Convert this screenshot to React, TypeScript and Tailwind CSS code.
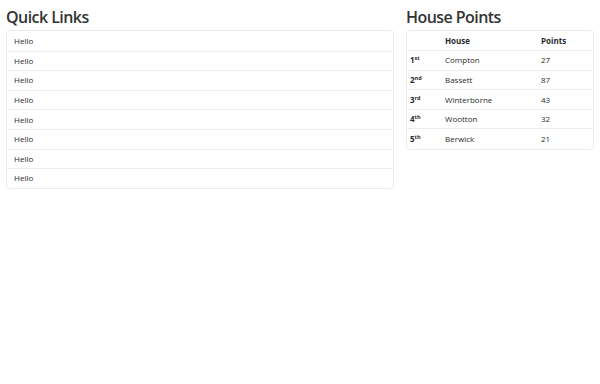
import React from "react";

const links = Array.from({ length: 8 }, () => "Hello");

const houses = [
    { rank: 1, suffix: "st", name: "Compton", points: 27 },
    { rank: 2, suffix: "nd", name: "Bassett", points: 87 },
    { rank: 3, suffix: "rd", name: "Winterborne", points: 43 },
    { rank: 4, suffix: "th", name: "Wootton", points: 32 },
    { rank: 5, suffix: "th", name: "Berwick", points: 21 },
];

export default function App() {
    return (
        <div className="w-[600px] h-[384px] bg-white text-[#2b2b2b] font-['Open_Sans',sans-serif]">
            <div className="grid grid-cols-[388px_188px] gap-x-[12px] px-[6px] pt-[5px]">
                <section>
                    <h2 className="text-[16px] leading-[25px] font-semibold tracking-[-0.55px] text-[#333]">Quick Links</h2>
                    <div className="border border-[#ebebeb] rounded-[4px] overflow-hidden">
                        {links.map((l, i) => (
                            <div
                                key={i}
                                className={`h-[19.6px] flex items-center px-[7px] text-[8px] ${i > 0 ? "border-t border-[#ececec]" : ""}`}
                            >
                                {l}
                            </div>
                        ))}
                    </div>
                </section>

                <section>
                    <h2 className="text-[16px] leading-[25px] font-semibold tracking-[-0.55px] text-[#333]">House Points</h2>
                    <div className="border border-[#ebebeb] rounded-[4px] overflow-hidden">
                        <table className="w-full text-[8px] border-collapse">
                            <colgroup>
                                <col className="w-[35px]" />
                                <col className="w-[96px]" />
                                <col />
                            </colgroup>
                            <thead>
                                <tr className="h-[19.6px]">
                                    <th className="px-[3px] text-left font-bold"></th>
                                    <th className="px-[3px] text-left font-bold">House</th>
                                    <th className="px-[3px] text-left font-bold">Points</th>
                                </tr>
                            </thead>
                            <tbody>
                                {houses.map((h) => (
                                    <tr key={h.rank} className="h-[19.6px] border-t border-[#ececec]">
                                        <td className="px-[3px] font-bold">
                                            {h.rank}
                                            <sup className="text-[5.5px] -top-[3px]">{h.suffix}</sup>
                                        </td>
                                        <td className="px-[3px]">{h.name}</td>
                                        <td className="px-[3px]">{h.points}</td>
                                    </tr>
                                ))}
                            </tbody>
                        </table>
                    </div>
                </section>
            </div>
        </div>
    );
}
